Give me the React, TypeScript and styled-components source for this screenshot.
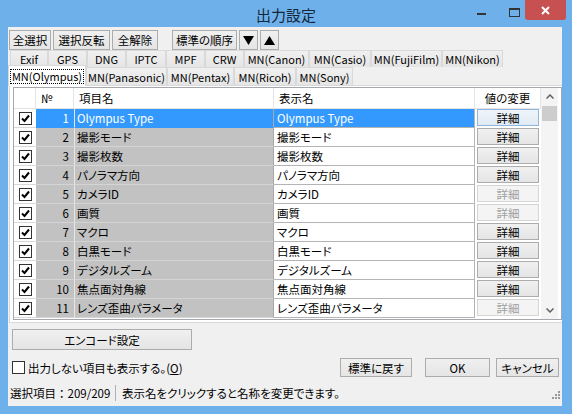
import styled, { createGlobalStyle } from "styled-components";

const FRAME = "#6eb1ea";

const GlobalStyle = createGlobalStyle`
  html, body {
    margin: 0;
    padding: 0;
    overflow: hidden;
    background: ${FRAME};
  }
  body {
    font-family: "Noto Sans CJK JP", "Liberation Sans", sans-serif;
    font-size: 11.5px;
    font-feature-settings: "palt";
    color: #000;
  }
`;

type Row = { no: number; name: string; detail: boolean };

const ROWS: Row[] = [
  { no: 1, name: "Olympus Type", detail: true },
  { no: 2, name: "撮影モード", detail: true },
  { no: 3, name: "撮影枚数", detail: true },
  { no: 4, name: "パノラマ方向", detail: true },
  { no: 5, name: "カメラID", detail: false },
  { no: 6, name: "画質", detail: false },
  { no: 7, name: "マクロ", detail: true },
  { no: 8, name: "白黒モード", detail: true },
  { no: 9, name: "デジタルズーム", detail: true },
  { no: 10, name: "焦点面対角線", detail: true },
  { no: 11, name: "レンズ歪曲パラメータ", detail: false },
];

const TABS_BACK: [string, number][] = [
  ["Exif", 38],
  ["GPS", 39],
  ["DNG", 39],
  ["IPTC", 40],
  ["MPF", 39],
  ["CRW", 39],
  ["MN(Canon)", 65],
  ["MN(Casio)", 62],
  ["MN(FujiFilm)", 71],
  ["MN(Nikon)", 61],
];

const TABS_FRONT: [string, number][] = [
  ["MN(Olympus)", 78],
  ["MN(Panasonic)", 81],
  ["MN(Pentax)", 67],
  ["MN(Ricoh)", 62],
  ["MN(Sony)", 57],
];

const App = () => {
  return (
    <>
      <GlobalStyle />
      <Window>
        <TitleBar>
          <span />
          <Title>出力設定</Title>
          <Controls>
            <MinButton>
              <svg width="9" height="2">
                <rect width="9" height="2" fill="#333" />
              </svg>
            </MinButton>
            <MaxButton>
              <svg width="11" height="9">
                <rect x="0.5" y="0.5" width="10" height="8" fill="none" stroke="#333" />
                <rect x="0" y="0" width="11" height="2" fill="#333" />
              </svg>
            </MaxButton>
            <CloseButton>
              <svg width="9" height="9">
                <path d="M1 1 L8 8 M8 1 L1 8" stroke="#fff" strokeWidth="2" />
              </svg>
            </CloseButton>
          </Controls>
        </TitleBar>

        <Body>
          <Toolbar>
            <ButtonGroup>
              <Button $w={42}>全選択</Button>
              <Button $w={57}>選択反転</Button>
              <Button $w={46}>全解除</Button>
            </ButtonGroup>
            <ButtonGroup>
              <Button $w={65}>標準の順序</Button>
              <Button $w={19}>
                <svg width="11" height="9">
                  <polygon points="0,0 11,0 5.5,9" fill="#000" />
                </svg>
              </Button>
              <Button $w={19}>
                <svg width="11" height="9">
                  <polygon points="0,9 11,9 5.5,0" fill="#000" />
                </svg>
              </Button>
            </ButtonGroup>
          </Toolbar>

          <TabRow $h={17} $indent={2}>
            {TABS_BACK.map(([label, w]) => (
              <Tab key={label} $w={w}>
                {label}
              </Tab>
            ))}
          </TabRow>
          <TabRow $h={18} $indent={0}>
            {TABS_FRONT.map(([label, w], i) => (
              <Tab key={label} $w={w} $active={i === 0}>
                {i === 0 ? <FocusLabel>{label}</FocusLabel> : label}
              </Tab>
            ))}
          </TabRow>

          <Panel>
            <Grid>
              <Table>
                <HeadRow>
                  <HeadCell $w={22} />
                  <HeadCell $w={38}>№</HeadCell>
                  <HeadCell $w={200}>項目名</HeadCell>
                  <HeadCell $w={201}>表示名</HeadCell>
                  <HeadCell $w={66} $center>
                    値の変更
                  </HeadCell>
                </HeadRow>
                {ROWS.map((r) => {
                  const sel = r.no === 1;
                  return (
                    <DataRow key={r.no}>
                      <CheckCell>
                        <CheckBox $checked />
                      </CheckCell>
                      <NoCell $sel={sel}>{r.no}</NoCell>
                      <NameCell $sel={sel}>{r.name}</NameCell>
                      <LabelCell $sel={sel}>{r.name}</LabelCell>
                      <ActionCell>
                        <DetailButton $disabled={!r.detail} $focused={sel}>
                          詳細
                        </DetailButton>
                      </ActionCell>
                    </DataRow>
                  );
                })}
              </Table>
              <ScrollBar>
                <ScrollArrow>
                  <svg width="8" height="5">
                    <path d="M0.5 4.5 L4 1 L7.5 4.5" fill="none" stroke="#606060" strokeWidth="1.5" />
                  </svg>
                </ScrollArrow>
                <ScrollThumb />
                <ScrollTrack />
                <ScrollArrow>
                  <svg width="8" height="5">
                    <path d="M0.5 0.5 L4 4 L7.5 0.5" fill="none" stroke="#606060" strokeWidth="1.5" />
                  </svg>
                </ScrollArrow>
              </ScrollBar>
            </Grid>
          </Panel>

          <EncodeButton>エンコード設定</EncodeButton>

          <OptionsRow>
            <CheckLabel>
              <CheckBox />
              <span>
                出力しない項目も表示する。(<u>O</u>)
              </span>
            </CheckLabel>
            <DialogButtons>
              <Button $w={72} $h={19}>
                標準に戻す
              </Button>
              <Button $w={65} $h={19}>
                OK
              </Button>
              <Button $w={63} $h={19}>
                キャンセル
              </Button>
            </DialogButtons>
          </OptionsRow>

          <StatusBar>
            <StatusPane $w={105} $fixed>
              選択項目：209/209
            </StatusPane>
            <StatusSep />
            <StatusPane>表示名をクリックすると名称を変更できます。</StatusPane>
            <SizeGrip>
              <svg width="9" height="10">
                {[
                  [7, 1],
                  [7, 4],
                  [4, 4],
                  [7, 7],
                  [4, 7],
                  [1, 7],
                ].map(([x, y]) => (
                  <rect key={`${x}-${y}`} x={x} y={y} width="2" height="2" fill="#9a9a9a" />
                ))}
              </svg>
            </SizeGrip>
          </StatusBar>
        </Body>
      </Window>
    </>
  );
};

const CheckBox = ({ $checked }: { $checked?: boolean }) => (
  <Box>
    {$checked && (
      <svg width="11" height="11">
        <path d="M2 5.5 L4.5 8 L9 2.5" fill="none" stroke="#000" strokeWidth="2" />
      </svg>
    )}
  </Box>
);

const Window = styled.div`
  width: 572px;
  height: 414px;
  background: ${FRAME};
  display: flex;
  flex-direction: column;
`;

const TitleBar = styled.div`
  height: 27px;
  display: grid;
  grid-template-columns: 1fr auto 1fr;
  flex: none;
`;

const Title = styled.div`
  font-size: 15px;
  line-height: 20px;
  padding-top: 5px;
  color: #14263a;
`;

const Controls = styled.div`
  display: flex;
  justify-content: flex-end;
  align-items: flex-start;
  padding-right: 6px;
`;

const WinButton = styled.div`
  height: 20px;
  display: flex;
  justify-content: center;
`;

const MinButton = styled(WinButton)`
  width: 26px;
  margin-right: 9px;
  padding-top: 13px;
  box-sizing: border-box;
`;

const MaxButton = styled(WinButton)`
  width: 22px;
  padding-top: 8px;
  box-sizing: border-box;
`;

const CloseButton = styled(WinButton)`
  width: 41px;
  background: #c75050;
  align-items: center;
  border-radius: 0 0 3px 3px;
`;

const Body = styled.div`
  flex: 1;
  margin: 0 10px 8px 8px;
  background: #f0f0f0;
  display: flex;
  flex-direction: column;
  overflow: hidden;
`;

const Toolbar = styled.div`
  display: flex;
  gap: 14px;
  padding: 3px 0 0 1px;
`;

const ButtonGroup = styled.div`
  display: flex;
  gap: 2px;
`;

const Button = styled.button<{ $w: number; $h?: number }>`
  box-sizing: border-box;
  width: ${({ $w }) => $w}px;
  height: ${({ $h }) => $h ?? 20}px;
  margin: 0;
  padding: 0;
  border: 1px solid #acacac;
  background: linear-gradient(#f0f0f0, #e5e5e5);
  font: inherit;
  font-size: 11.5px;
  font-feature-settings: "palt";
  color: #000;
  display: flex;
  align-items: center;
  justify-content: center;
  white-space: nowrap;
`;

const TabRow = styled.div<{ $h: number; $indent: number }>`
  display: flex;
  align-items: flex-end;
  height: ${({ $h }) => $h}px;
  padding-left: ${({ $indent }) => $indent}px;
  flex: none;
`;

const Tab = styled.div<{ $w: number; $active?: boolean }>`
  box-sizing: border-box;
  width: ${({ $w }) => $w}px;
  height: ${({ $active }) => ($active ? "21px" : "100%")};
  margin-bottom: ${({ $active }) => ($active ? "-1px" : "0")};
  position: relative;
  z-index: ${({ $active }) => ($active ? 1 : 0)};
  border: 1px solid #d9d9d9;
  border-bottom: none;
  background: ${({ $active }) => ($active ? "#fff" : "linear-gradient(#f0f0f0, #e5e5e5)")};
  display: flex;
  align-items: center;
  justify-content: center;
  font-size: 11px;
  line-height: 14px;
  white-space: nowrap;
  flex: none;
`;

const FocusLabel = styled.span`
  border: 1px dotted #000;
  padding: 0 1px;
  line-height: 13px;
`;

const Panel = styled.div`
  box-sizing: border-box;
  height: 238px;
  margin-left: 1px;
  border: 1px solid #d9d9d9;
  border-right: none;
  background: #fff;
  padding: 1px 0 2px 3px;
  flex: none;
`;

const Grid = styled.div`
  box-sizing: border-box;
  height: 233px;
  border: 1px solid #a5a7ad;
  background: #fff;
  display: flex;
  padding-right: 3px;
  overflow: hidden;
`;

const Table = styled.div`
  width: 527px;
  flex: none;
  display: flex;
  flex-direction: column;
  overflow: hidden;
`;

const HeadRow = styled.div`
  display: flex;
  height: 21px;
  flex: none;
  border-bottom: 1px solid #e3e3e3;
  box-sizing: border-box;
`;

const HeadCell = styled.div<{ $w: number; $center?: boolean }>`
  box-sizing: border-box;
  width: ${({ $w }) => $w}px;
  flex: none;
  padding: 0 5px;
  border-right: 1px solid #e5e5e5;
  line-height: 20px;
  text-align: ${({ $center }) => ($center ? "center" : "left")};
  white-space: nowrap;
`;

const DataRow = styled.div`
  display: flex;
  height: 19px;
  flex: none;
`;

const Cell = styled.div`
  box-sizing: border-box;
  height: 19px;
  flex: none;
  line-height: 18px;
  white-space: nowrap;
  overflow: hidden;
  border-bottom: 1px solid #b4b4b4;
`;

const CheckCell = styled(Cell)`
  width: 22px;
  display: flex;
  align-items: center;
  justify-content: center;
  border-bottom-color: #d8d8d8;
`;

const GreyCell = styled(Cell)<{ $sel?: boolean }>`
  background: ${({ $sel }) => ($sel ? "#3399ff" : "#c2c2c2")};
  color: ${({ $sel }) => ($sel ? "#fff" : "#000")};
  border-bottom-color: ${({ $sel }) => ($sel ? "#3399ff" : "#d4d4d4")};
`;

const NoCell = styled(GreyCell)`
  width: 38px;
  text-align: right;
  padding-right: 5px;
`;

const NameCell = styled(GreyCell)`
  width: 200px;
  padding-left: 2px;
  border-left: 1px solid #e6e6e6;
  border-right: 1px solid #a8a8a8;
`;

const LabelCell = styled(Cell)<{ $sel?: boolean }>`
  width: 201px;
  padding-left: 3px;
  background: ${({ $sel }) => ($sel ? "#3399ff" : "#fff")};
  color: ${({ $sel }) => ($sel ? "#fff" : "#000")};
  border-right: 1px solid #b4b4b4;
`;

const ActionCell = styled(Cell)`
  width: 66px;
  padding: 0 2px 1px 2px;
  display: flex;
  align-items: stretch;
  border-bottom-color: #fff;
`;

const DetailButton = styled.div<{ $disabled?: boolean; $focused?: boolean }>`
  flex: 1;
  box-sizing: border-box;
  border: 1px solid
    ${({ $disabled, $focused }) => ($focused ? "#8fb6dc" : $disabled ? "#d5d5d5" : "#acacac")};
  background: ${({ $disabled, $focused }) =>
    $focused ? "linear-gradient(#eef4fa, #e2ebf4)" : $disabled ? "#f4f4f4" : "linear-gradient(#f0f0f0, #e5e5e5)"};
  color: ${({ $disabled }) => ($disabled ? "#a0a0a0" : "#000")};
  text-align: center;
  line-height: 16px;
`;

const Box = styled.span`
  box-sizing: border-box;
  width: 13px;
  height: 13px;
  border: 1px solid #333;
  background: #fff;
  display: inline-flex;
  align-items: center;
  justify-content: center;
  flex: none;
`;

const ScrollBar = styled.div`
  width: 17px;
  flex: none;
  display: flex;
  flex-direction: column;
  background: #f4f4f4;
`;

const ScrollArrow = styled.div`
  height: 17px;
  display: flex;
  align-items: center;
  justify-content: center;
  flex: none;
`;

const ScrollThumb = styled.div`
  height: 15px;
  margin: 1px 1px 0;
  background: #cdcdcd;
  flex: none;
`;

const ScrollTrack = styled.div`
  flex: 1;
`;

const EncodeButton = styled(Button).attrs({ $w: 180, $h: 21 })`
  margin: 6px 0 0 4px;
  flex: none;
`;

const OptionsRow = styled.div`
  height: 33px;
  box-sizing: border-box;
  padding: 2px 3px 0 4px;
  display: flex;
  align-items: center;
  flex: none;
`;

const CheckLabel = styled.label`
  display: flex;
  align-items: center;
  gap: 3px;
  line-height: 16px;
`;

const DialogButtons = styled.div`
  margin-left: auto;
  display: flex;
  gap: 6px;

  & > :first-child {
    margin-right: 7px;
  }
`;

const StatusBar = styled.div`
  height: 20px;
  display: flex;
  align-items: center;
  padding-left: 2px;
  flex: none;
`;

const StatusPane = styled.div<{ $w?: number; $fixed?: boolean }>`
  width: ${({ $w }) => ($w ? `${$w}px` : "auto")};
  padding-left: ${({ $w }) => ($w ? "0" : "6px")};
  font-feature-settings: ${({ $fixed }) => ($fixed ? "normal" : '"palt"')};
  white-space: nowrap;
  line-height: 16px;
`;

const StatusSep = styled.div`
  width: 0;
  height: 16px;
  border-left: 1px solid #b0b0b0;
`;

const SizeGrip = styled.div`
  margin-left: auto;
  margin-right: 2px;
  align-self: flex-end;
  margin-bottom: 3px;
  display: flex;
`;

export default App;
